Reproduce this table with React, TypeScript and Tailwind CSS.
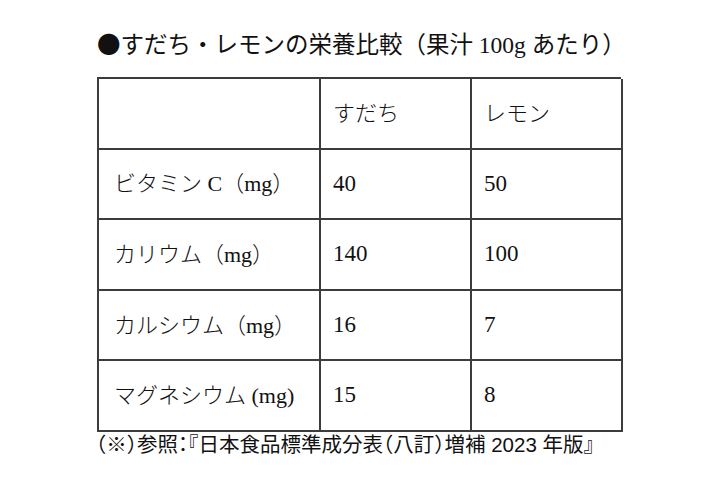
import React from 'react';

const rows = [
  { label: 'ビタミン C（mg）', sudachi: '40', lemon: '50' },
  { label: 'カリウム（mg）', sudachi: '140', lemon: '100' },
  { label: 'カルシウム（mg）', sudachi: '16', lemon: '7' },
  { label: 'マグネシウム (mg)', sudachi: '15', lemon: '8' },
];

const serif = "font-['Liberation_Serif','Noto_Sans_CJK_JP',serif]";
const cell = 'h-[70.6px] flex items-center border-r-2 border-b-2 border-[#3c3c3c]';

const App = () => {
  return (
    <div className="w-[720px] h-[480px] bg-white text-[#111] pl-[97px] pt-[28px]">
      <h1 className={`${serif} text-[23.5px] leading-[30px] font-normal`}>
        <span className="font-['Noto_Sans_CJK_JP',sans-serif]">●</span>すだち・レモンの栄養比較（果汁 100g あたり）
      </h1>

      <div className={`${serif} mt-[17px] w-[524px] grid grid-cols-[222px_151px_151px] border-l-2 border-t-2 border-[#3c3c3c] text-[22px] font-light`}>
        <div className={cell} />
        <div className={`${cell} pl-[12px]`}>すだち</div>
        <div className={`${cell} pl-[12px]`}>レモン</div>
        {rows.map(r => (
          <React.Fragment key={r.label}>
            <div className={`${cell} pl-[15px] whitespace-nowrap`}>{r.label}</div>
            <div className={`${cell} pl-[12px] text-[23px]`}>{r.sudachi}</div>
            <div className={`${cell} pl-[12px] text-[23px]`}>{r.lemon}</div>
          </React.Fragment>
        ))}
      </div>

      <p className="font-['Liberation_Sans','Noto_Sans_CJK_JP',sans-serif] text-[20.5px] leading-[26px] [font-feature-settings:'halt'] -ml-[1px]">
        （※）参照：『日本食品標準成分表（八訂）増補 2023 年版』
      </p>
    </div>
  );
};

export default App;
